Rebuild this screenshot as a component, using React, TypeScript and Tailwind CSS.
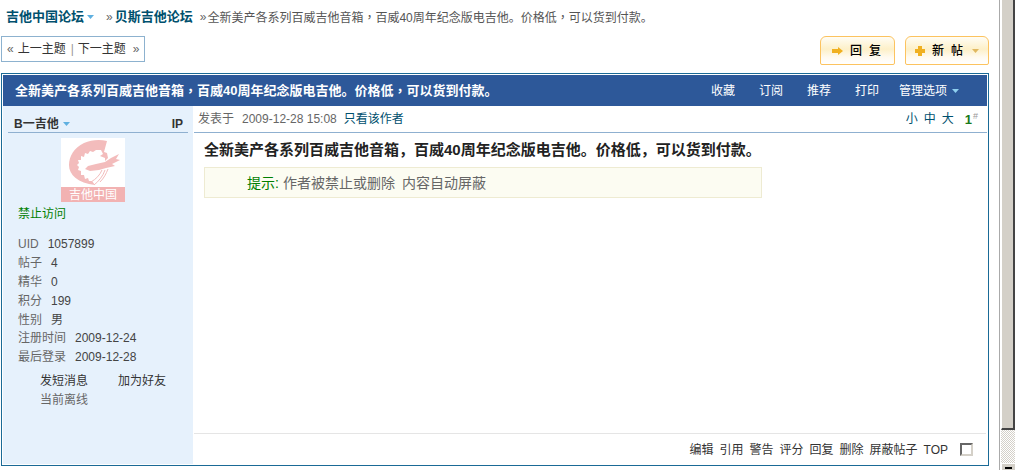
import React from "react";

const Caret = ({ color = "#5fb0e0" }: { color?: string }) => (
  <svg width="7" height="4" viewBox="0 0 7 4" className="inline-block shrink-0">
    <path d="M0 0h7L3.5 4z" fill={color} />
  </svg>
);

const Comma = () => <span className="font-['Noto_Sans_CJK_TC',sans-serif]">，</span>;

const stats = [
  { label: "UID", value: "1057899" },
  { label: "帖子", value: "4" },
  { label: "精华", value: "0" },
  { label: "积分", value: "199" },
  { label: "性别", value: "男" },
  { label: "注册时间", value: "2009-12-24" },
  { label: "最后登录", value: "2009-12-28" },
];

const navItems = ["收藏", "订阅", "推荐", "打印"];
const actions = ["编辑", "引用", "警告", "评分", "回复", "删除", "屏蔽帖子", "TOP"];

const Avatar = () => (
  <div className="flex h-16 w-16 flex-col bg-white">
    <svg width="64" height="49" viewBox="0 0 64 49" className="shrink-0">
      {/* dragon body, curled into a G */}
      <path
        d="M46 3C38 1 30 2 23 5 13 10 8 18 8 27c0 10 9 18 26 20l-3-4-3 0-1-3-3 1-1-4-3 0 0-4-3-1 1-3-2-2 2-2-1-3 3 0 0-4 3 1 1-4 3 1 2-3 3 1 3-2 5 0 2 4-3 2 5 2 0 3 3-3-1-5-3-1z"
        fill="#f3bcbc"
      />
      {/* head and jaw */}
      <path d="M24 31l3-3 8-2 9-2 6-4 8-4-3 5 4 1-8 4 3 2-9 2-7 2-9 1z" fill="#f3bcbc" />
      <path
        d="M44 32c-2 6-6 11-11 15M47 31c-2 5-4 9-8 13M41 32c-2 5-6 9-11 12"
        stroke="#f3bcbc"
        strokeWidth="1"
        fill="none"
      />
    </svg>
    <div className="flex h-[15px] items-center justify-center bg-[#f2b2b2] text-[12px] leading-none text-white">
      吉他中国
    </div>
  </div>
);

const ActionButton = ({
  icon,
  label,
  trailing,
  width,
}: {
  icon: React.ReactNode;
  label: string;
  trailing?: React.ReactNode;
  width: string;
}) => (
  <div
    className={`flex h-[29px] items-center justify-center gap-[7px] rounded-t-[6px] rounded-b-[2px] border border-[#fcc35f] bg-[linear-gradient(#fffdf5,#fdf0c8_45%,#fffaf0_75%,#fff)] text-[12px] text-black ${width}`}
  >
    {icon}
    <span className="-mr-[5px] font-medium tracking-[7px]">{label}</span>
    {trailing}
  </div>
);

export default function App() {
  return (
    <div className="flex h-[470px] w-[1015px] overflow-hidden bg-white font-['Liberation_Sans','Noto_Sans_CJK_SC',sans-serif] text-[12px] text-[#444]">
      <main className="flex w-[999px] shrink-0 flex-col pl-px pr-[10px]">
        {/* Breadcrumb */}
        <div className="flex h-[36px] items-center pb-[2px] pl-[5px]">
          <span className="text-[13px] font-bold text-[#00506e]">吉他中国论坛</span>
          <span className="ml-[3px] flex"><Caret /></span>
          <span className="ml-[12px] text-[#666]">»</span>
          <span className="ml-[2px] text-[13px] font-bold text-[#00506e]">贝斯吉他论坛</span>
          <span className="ml-[7px] mr-px text-[#666]">»</span>
          <span className="text-[#555]">
            全新美产各系列百威吉他音箱<Comma />百威40周年纪念版电吉他。价格低<Comma />可以货到付款。
          </span>
        </div>

        {/* Prev / next + post buttons */}
        <div className="flex h-[37px] items-start justify-between">
          <div className="flex h-[26px] w-[144px] items-center border border-[#8db2cf] pl-[5px] text-[#333]">
            <span className="text-[#666]">«</span>
            <span className="ml-[4px]">上一主题</span>
            <span className="ml-[5px] mr-[4px] text-[#999]">|</span>
            <span>下一主题</span>
            <span className="ml-[7px] text-[#666]">»</span>
          </div>
          <div className="flex gap-[10px]">
            <ActionButton
              width="w-[75px]"
              label="回复"
              icon={
                <svg width="11" height="8" viewBox="0 0 11 8">
                  <path d="M0 2h6V0l5 4-5 4V6H0z" fill="#f0b020" />
                </svg>
              }
            />
            <ActionButton
              width="w-[84px]"
              label="新帖"
              icon={
                <svg width="10" height="10" viewBox="0 0 10 10">
                  <path d="M3 0h4v3h3v4H7v3H3V7H0V3h3z" fill="#f0b020" />
                </svg>
              }
              trailing={<Caret color="#e0b860" />}
            />
          </div>
        </div>

        {/* Post card */}
        <section className="flex h-[393px] w-[988px] flex-col border border-[#1a6a96] p-px">
          <header className="flex h-[31px] shrink-0 items-center justify-between bg-[#2d5899] pl-[12px] pr-[28px] text-white">
            <h1 className="text-[13px] font-bold">
              全新美产各系列百威吉他音箱<Comma />百威40周年纪念版电吉他。价格低<Comma />可以货到付款。
            </h1>
            <nav className="flex items-center gap-[24px]">
              {navItems.map((item) => (
                <span key={item}>{item}</span>
              ))}
              <span className="-ml-[4px] flex items-center gap-[5px]">
                管理选项
                <Caret color="#8fd0f0" />
              </span>
            </nav>
          </header>

          <div className="flex min-h-0 flex-1">
            {/* Author column */}
            <aside className="flex w-[190px] shrink-0 flex-col bg-[#e6f1fc] px-[5px]">
              <div className="flex h-[27px] shrink-0 items-center justify-between border-b border-[#8fb0d0] pl-[6px] pr-[5px] pt-[10px] text-[#333]">
                <span className="flex items-center gap-[4px] font-bold">
                  B一吉他
                  <Caret />
                </span>
                <span className="font-bold">IP</span>
              </div>
              <div className="ml-[53px] mt-[5px]">
                <Avatar />
              </div>
              <div className="mt-[3px] pl-[10px] leading-[18px] text-[#008000]">禁止访问</div>
              <dl className="mt-[12px] flex flex-col pl-[10px] text-[#444]">
                {stats.map((row) => (
                  <div key={row.label} className="flex h-[18.8px] items-center gap-[9px]">
                    <dt className="text-[#666]">{row.label}</dt>
                    <dd>{row.value}</dd>
                  </div>
                ))}
              </dl>
              <div className="mt-[5px] flex h-[19px] items-center gap-[30px] pl-[32px] text-[#333]">
                <span>发短消息</span>
                <span>加为好友</span>
              </div>
              <div className="flex h-[19px] items-center pl-[32px] text-[#666]">当前离线</div>
            </aside>

            {/* Post column */}
            <div className="flex min-w-0 flex-1 flex-col pl-px">
              <div className="flex h-[27px] shrink-0 items-center justify-between border-b border-[#8fb0d0] pl-[4px] pr-[9px] text-[#666]">
                <div className="flex items-center">
                  <span>发表于</span>
                  <span className="ml-[8px]">2009-12-28 15:08</span>
                  <span className="ml-[7px] text-[#00506e]">只看该作者</span>
                </div>
                <div className="flex items-center text-[#00506e]">
                  <span className="tracking-[6px]">小中大</span>
                  <span className="relative ml-[5px] pr-[6px] text-[13px] font-bold leading-none text-[#1a7a1a]">
                    1
                    <sup className="absolute right-0 top-[3px] text-[9px] font-normal text-[#999]">#</sup>
                  </span>
                </div>
              </div>

              <div className="flex-1 pl-[10px] pt-[7px]">
                <h2 className="text-[15px] font-bold leading-[20px] text-[#222]">
                  全新美产各系列百威吉他音箱，百威40周年纪念版电吉他。价格低，可以货到付款。
                </h2>
                <div className="mt-[7px] flex h-[31px] w-[558px] items-center border border-[#eeebd2] bg-[#fcfcf2] pl-[42px] pt-[2px] text-[14px] text-[#666]">
                  <span className="text-[#008000]">提示:</span>
                  <span className="ml-[4px]">作者被禁止或删除</span>
                  <span className="ml-[7px]">内容自动屏蔽</span>
                </div>
              </div>

              <div className="mr-px flex h-[31px] shrink-0 items-center justify-end gap-[6px] border-t border-[#e5e5e5] pr-[13px] pt-[1px] text-[#333]">
                {actions.map((a) => (
                  <span key={a}>{a}</span>
                ))}
                <span className="ml-[6px] h-[13px] w-[13px] border-2 border-b-[#d4d0c8] border-l-[#666] border-r-[#d4d0c8] border-t-[#666] bg-white" />
              </div>
            </div>
          </div>
        </section>
      </main>

      {/* Window scrollbar */}
      <div className="flex w-[16px] shrink-0 flex-col border-l border-[#aaa] pl-px">
        <div className="h-[430px] shrink-0 border-b-2 border-l border-r-2 border-b-[#444] border-l-white border-r-[#444] bg-[#d4d0c8]" />
        <div className="flex-1 bg-[repeating-conic-gradient(#d4d0c8_0_25%,#fff_0_50%)] bg-[length:2px_2px]" />
        <div className="flex h-[7px] shrink-0 justify-center border-l border-t border-white bg-[#d4d0c8]">
          <div className="mt-[3px] h-[2px] w-[7px] bg-black" />
        </div>
      </div>
    </div>
  );
}
